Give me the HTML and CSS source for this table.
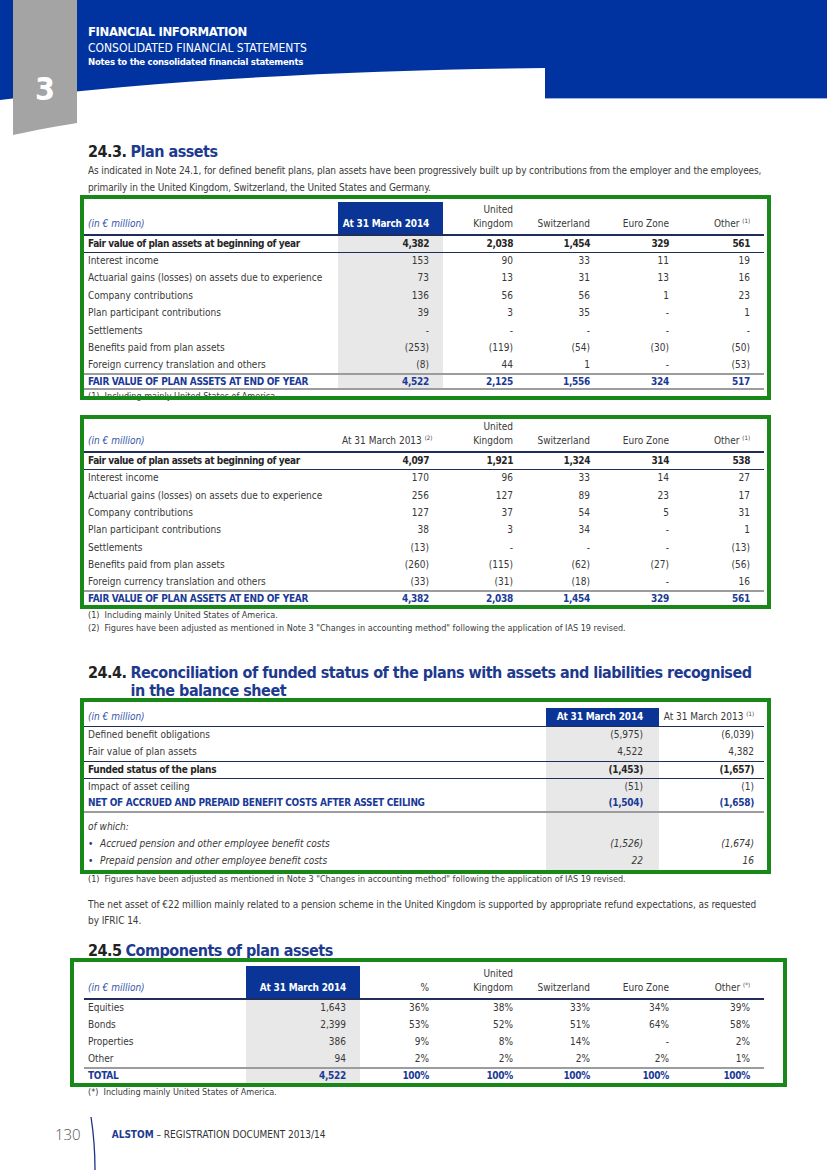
FILE: index.html
```html
<!DOCTYPE html>
<html lang="en">
<head>
<meta charset="utf-8">
<title>Notes to the consolidated financial statements</title>
<link rel="stylesheet" href="styles.css">
</head>
<body>
<div class="page">
  <header class="masthead">
    <svg class="masthead-art" width="827" height="142" viewBox="0 0 827 142" aria-hidden="true">
      <path d="M0 0 H827 V98 H545 V68 C350 70 160 80 0 100 Z" fill="#0033a0"/>
      <path d="M545 98.5 H827" stroke="#9db1e4" stroke-width="1"/>
      <path d="M13 0 H77 V123 C58 126 36 130 13 135 Z" fill="#a4a4a4"/>
    </svg>
    <div class="chapter-no">3</div>
    <div class="masthead-text">
      <div class="mh-1">FINANCIAL INFORMATION</div>
      <div class="mh-2">CONSOLIDATED FINANCIAL STATEMENTS</div>
      <div class="mh-3">Notes to the consolidated financial statements</div>
    </div>
  </header>

  <main class="content">
    <h2 class="sec-title"><span class="sec-no">24.3.</span><span class="sec-name">Plan assets</span></h2>
    <p class="text">As indicated in Note 24.1, for defined benefit plans, plan assets have been progressively built up by contributions from the employer and the employees, primarily in the United Kingdom, Switzerland, the United States and Germany.</p>

    <div class="framed framed--a">
      <table class="grid grid--six">
        <colgroup><col class="w-label6"><col class="w-n1"><col class="w-n2"><col class="w-n3"><col class="w-n4"><col class="w-n5"></colgroup>
        <thead>
          <tr><th class="unit">(in € million)</th><th class="hl">At 31 March 2014</th><th>United<br>Kingdom</th><th>Switzerland</th><th>Euro Zone</th><th>Other <sup>(1)</sup></th></tr>
        </thead>
        <tbody>
          <tr class="opening"><td>Fair value of plan assets at beginning of year</td><td class="shade">4,382</td><td>2,038</td><td>1,454</td><td>329</td><td>561</td></tr>
          <tr><td>Interest income</td><td class="shade">153</td><td>90</td><td>33</td><td>11</td><td>19</td></tr>
          <tr><td>Actuarial gains (losses) on assets due to experience</td><td class="shade">73</td><td>13</td><td>31</td><td>13</td><td>16</td></tr>
          <tr><td>Company contributions</td><td class="shade">136</td><td>56</td><td>56</td><td>1</td><td>23</td></tr>
          <tr><td>Plan participant contributions</td><td class="shade">39</td><td>3</td><td>35</td><td>-</td><td>1</td></tr>
          <tr><td>Settlements</td><td class="shade">-</td><td>-</td><td>-</td><td>-</td><td>-</td></tr>
          <tr><td>Benefits paid from plan assets</td><td class="shade">(253)</td><td>(119)</td><td>(54)</td><td>(30)</td><td>(50)</td></tr>
          <tr><td>Foreign currency translation and others</td><td class="shade">(8)</td><td>44</td><td>1</td><td>-</td><td>(53)</td></tr>
          <tr class="total"><td>FAIR VALUE OF PLAN ASSETS AT END OF YEAR</td><td class="shade">4,522</td><td>2,125</td><td>1,556</td><td>324</td><td>517</td></tr>
        </tbody>
      </table>
    </div>
    <p class="note note--hidden">(1)&nbsp; Including mainly United States of America.</p>

    <div class="framed framed--b">
      <table class="grid grid--six">
        <colgroup><col class="w-label6"><col class="w-n1"><col class="w-n2"><col class="w-n3"><col class="w-n4"><col class="w-n5"></colgroup>
        <thead>
          <tr><th class="unit">(in € million)</th><th>At 31 March 2013 <sup>(2)</sup></th><th>United<br>Kingdom</th><th>Switzerland</th><th>Euro Zone</th><th>Other <sup>(1)</sup></th></tr>
        </thead>
        <tbody>
          <tr class="opening"><td>Fair value of plan assets at beginning of year</td><td>4,097</td><td>1,921</td><td>1,324</td><td>314</td><td>538</td></tr>
          <tr><td>Interest income</td><td>170</td><td>96</td><td>33</td><td>14</td><td>27</td></tr>
          <tr><td>Actuarial gains (losses) on assets due to experience</td><td>256</td><td>127</td><td>89</td><td>23</td><td>17</td></tr>
          <tr><td>Company contributions</td><td>127</td><td>37</td><td>54</td><td>5</td><td>31</td></tr>
          <tr><td>Plan participant contributions</td><td>38</td><td>3</td><td>34</td><td>-</td><td>1</td></tr>
          <tr><td>Settlements</td><td>(13)</td><td>-</td><td>-</td><td>-</td><td>(13)</td></tr>
          <tr><td>Benefits paid from plan assets</td><td>(260)</td><td>(115)</td><td>(62)</td><td>(27)</td><td>(56)</td></tr>
          <tr><td>Foreign currency translation and others</td><td>(33)</td><td>(31)</td><td>(18)</td><td>-</td><td>16</td></tr>
          <tr class="total"><td>FAIR VALUE OF PLAN ASSETS AT END OF YEAR</td><td>4,382</td><td>2,038</td><td>1,454</td><td>329</td><td>561</td></tr>
        </tbody>
      </table>
    </div>
    <p class="note note--first">(1)&nbsp; Including mainly United States of America.</p>
    <p class="note">(2)&nbsp; Figures have been adjusted as mentioned in Note 3 "Changes in accounting method" following the application of IAS 19 revised.</p>

    <h2 class="sec-title sec-title--two"><span class="sec-no">24.4.</span><span class="sec-name">Reconciliation of funded status of the plans with assets and liabilities recognised in the balance sheet</span></h2>

    <div class="framed framed--c">
      <table class="grid grid--three">
        <colgroup><col class="w-label3"><col class="w-r1"><col class="w-r2"></colgroup>
        <thead>
          <tr><th class="unit">(in € million)</th><th class="hl">At 31 March 2014</th><th>At 31 March 2013 <sup>(1)</sup></th></tr>
        </thead>
        <tbody>
          <tr><td>Defined benefit obligations</td><td class="shade">(5,975)</td><td>(6,039)</td></tr>
          <tr class="pre-sub"><td>Fair value of plan assets</td><td class="shade">4,522</td><td>4,382</td></tr>
          <tr class="subtotal"><td>Funded status of the plans</td><td class="shade">(1,453)</td><td>(1,657)</td></tr>
          <tr><td>Impact of asset ceiling</td><td class="shade">(51)</td><td>(1)</td></tr>
          <tr class="total total--open"><td>NET OF ACCRUED AND PREPAID BENEFIT COSTS AFTER ASSET CEILING</td><td class="shade">(1,504)</td><td>(1,658)</td></tr>
          <tr class="detail detail--head"><td>of which:</td><td class="shade"></td><td></td></tr>
          <tr class="detail"><td><span class="dot">•</span>Accrued pension and other employee benefit costs</td><td class="shade">(1,526)</td><td>(1,674)</td></tr>
          <tr class="detail"><td><span class="dot">•</span>Prepaid pension and other employee benefit costs</td><td class="shade">22</td><td>16</td></tr>
        </tbody>
      </table>
    </div>
    <p class="note note--single">(1)&nbsp; Figures have been adjusted as mentioned in Note 3 "Changes in accounting method" following the application of IAS 19 revised.</p>

    <p class="text text--after">The net asset of €22 million mainly related to a pension scheme in the United Kingdom is supported by appropriate refund expectations, as requested by IFRIC 14.</p>

    <h2 class="sec-title sec-title--last"><span class="sec-no">24.5</span><span class="sec-name">Components of plan assets</span></h2>

    <div class="framed framed--d">
      <table class="grid grid--seven">
        <colgroup><col class="w-label7"><col class="w-m1"><col class="w-pct"><col class="w-n2"><col class="w-n3"><col class="w-n4"><col class="w-n5"></colgroup>
        <thead>
          <tr><th class="unit">(in € million)</th><th class="hl">At 31 March 2014</th><th>%</th><th>United<br>Kingdom</th><th>Switzerland</th><th>Euro Zone</th><th>Other <sup>(*)</sup></th></tr>
        </thead>
        <tbody>
          <tr><td>Equities</td><td class="shade">1,643</td><td>36%</td><td>38%</td><td>33%</td><td>34%</td><td>39%</td></tr>
          <tr><td>Bonds</td><td class="shade">2,399</td><td>53%</td><td>52%</td><td>51%</td><td>64%</td><td>58%</td></tr>
          <tr><td>Properties</td><td class="shade">386</td><td>9%</td><td>8%</td><td>14%</td><td>-</td><td>2%</td></tr>
          <tr><td>Other</td><td class="shade">94</td><td>2%</td><td>2%</td><td>2%</td><td>2%</td><td>1%</td></tr>
          <tr class="total"><td>TOTAL</td><td class="shade">4,522</td><td>100%</td><td>100%</td><td>100%</td><td>100%</td><td>100%</td></tr>
        </tbody>
      </table>
    </div>
    <p class="note note--single">(*)&nbsp; Including mainly United States of America.</p>
  </main>

  <footer class="folio">
    <span class="page-no">130</span>
    <svg class="folio-rule" width="14" height="53" viewBox="0 0 14 53" aria-hidden="true">
      <path d="M2 0 C4.5 16 6 34 6 53" stroke="#1d3380" stroke-width="1.3" fill="none"/>
    </svg>
    <span class="doc-title"><b>ALSTOM</b> – REGISTRATION DOCUMENT 2013/14</span>
  </footer>
</div>
</body>
</html>
```

FILE: styles.css
```css
* { box-sizing: border-box; }
html, body { margin: 0; padding: 0; background: #fff; }
body {
  font-family: "Liberation Sans Narrow", "DejaVu Sans Condensed", "Roboto Condensed", Roboto, sans-serif;
  color: #383838;
  font-size: 10px;
}
.page {
  width: 827px;
  height: 1170px;
  overflow: hidden;
  display: flex;
  flex-direction: column;
}

/* ---------- masthead ---------- */
.masthead { position: relative; height: 142px; flex: none; }
.masthead-art { position: absolute; left: 0; top: 0; }
.chapter-no {
  position: absolute;
  left: 13px; top: 71px; width: 64px;
  text-align: center;
  color: #fff;
  font-size: 32px; line-height: 36px; font-weight: 700;
}
.masthead-text { position: relative; padding: 23px 0 0 88px; color: #fff; }
.mh-1 { font-size: 13px; line-height: 18px; font-weight: 700; letter-spacing: -0.4px; }
.mh-2 { font-size: 12px; line-height: 14px; }
.mh-3 { font-size: 9.5px; line-height: 14px; font-weight: 700; letter-spacing: -0.25px; }

/* ---------- content ---------- */
.content { padding: 0 63px 0 84px; flex: none; }
.sec-title {
  display: flex; gap: 4px;
  margin: 0; padding-left: 4px;
  font-size: 16px; line-height: 20px; font-weight: 700;
  letter-spacing: -0.5px;
  color: #222;
}
.sec-name { color: #1d3a8f; }
.sec-title--two { margin-top: 29px; line-height: 18px; }
.sec-title--last { margin-top: 13px; line-height: 18px; }
.text { margin: 0; padding-left: 4px; font-size: 10px; line-height: 17px; letter-spacing: -0.12px; color: #3a3a3a; }
.text--after { margin-top: 12px; line-height: 16px; letter-spacing: -0.07px; }

.note { margin: 0; padding-left: 4px; font-size: 9px; line-height: 13px; color: #3a3a3a; }
.note--hidden { line-height: 12px; }
.note--first { margin-top: 2px; }
.note--single { margin-top: 3px; line-height: 12px; }

/* green review frames drawn over the tables */
.framed { position: relative; }
.framed::after {
  content: "";
  position: absolute;
  border: 4px solid #188818;
  pointer-events: none;
}
.framed--a { margin-top: 6px; }
.framed--a::after { left: -4px; right: -7px; top: -7px; bottom: -10px; }
.framed--b { margin-top: 17px; }
.framed--b::after { left: -4px; right: -7px; top: -4px; bottom: -2px; }
.framed--c { margin-top: 8px; }
.framed--c::after { left: -4px; right: -7px; top: -10px; bottom: -4px; }
.framed--d { margin-top: 6px; }
.framed--d::after { left: -14px; right: -23px; top: -8px; bottom: -4px; }

/* ---------- tables ---------- */
.grid {
  width: 680px;
  border-collapse: collapse;
  table-layout: fixed;
  font-size: 10px;
  color: #383838;
}
.grid th, .grid td {
  padding: 0 14px 0 4px;
  text-align: right;
  white-space: nowrap;
  font-weight: 400;
}
.grid th:first-child, .grid td:first-child { text-align: left; padding-left: 4px; }
.grid thead th {
  vertical-align: bottom;
  height: 33px;
  line-height: 14px;
  padding-bottom: 3px;
  border-bottom: 2px solid #1f2d5a;
}
.grid tbody td { height: 17.4px; line-height: 12px; }

.grid th.unit { font-style: italic; color: #3556a8; }
.grid th.hl { background: #0a3597; color: #fff; font-weight: 700; letter-spacing: -0.2px; }
.grid td.shade { background: #e8e8e8; }
.grid sup { font-size: 6px; vertical-align: 4px; line-height: 0; }

.grid tr.opening td { font-weight: 700; color: #262626; letter-spacing: -0.4px; border-bottom: 1px solid #1f2d5a; }
.grid tr.total td {
  font-weight: 700;
  color: #1a3a97;
  letter-spacing: -0.3px;
  border-top: 2px solid #9c9c9c;
  border-bottom: 2px solid #9c9c9c;
  height: 15px;
}

col.w-label6 { width: 254px; }
col.w-n1 { width: 105px; }
col.w-n2 { width: 84px; }
col.w-n3 { width: 77px; }
col.w-n4 { width: 79px; }
col.w-n5 { width: 81px; }

/* three-column table */
col.w-label3 { width: 462px; }
col.w-r1 { width: 113px; }
col.w-r2 { width: 105px; }
.grid--three thead th { height: 18px; padding-bottom: 2px; border-bottom: 1px solid #1f2d5a; }
.grid--three th:last-child, .grid--three td:last-child { padding-right: 10px; }
.grid--three th.hl { padding-right: 16px; }
.grid--three td.shade { padding-right: 16px; }
.grid--three tr.pre-sub td { border-bottom: 1px solid #1f2d5a; }
.grid--three tr.subtotal td { font-weight: 700; color: #262626; letter-spacing: -0.3px; border-bottom: 1px solid #1f2d5a; }
.grid--three tr.total--open td { border-top: 0; height: 16px; }
.grid--three tr.detail td { font-style: italic; height: 17.5px; }
.grid--three tr.detail--head td { height: 23px; vertical-align: bottom; padding-bottom: 2px; }
.dot { font-style: normal; color: #1d3a8f; display: inline-block; width: 12px; }

/* seven-column table */
col.w-label7 { width: 162px; }
col.w-m1 { width: 114px; }
col.w-pct { width: 83px; }
.grid--seven tbody td { height: 17.3px; }
.grid--seven tr.total td { height: 15px; border-bottom: 0; }

/* ---------- footer ---------- */
.folio { margin-top: auto; flex: none; display: flex; align-items: flex-start; height: 53px; padding-left: 55px; }
.page-no { margin-top: 9px; font-family: "Open Sans", "DejaVu Sans", sans-serif; font-weight: 300; font-size: 15px; line-height: 17px; color: #555; }
.folio-rule { margin-left: 8px; }
.doc-title { margin-left: 9px; margin-top: 12px; font-size: 10px; line-height: 12px; color: #333; }
.doc-title b { color: #1d3a8f; }
```
